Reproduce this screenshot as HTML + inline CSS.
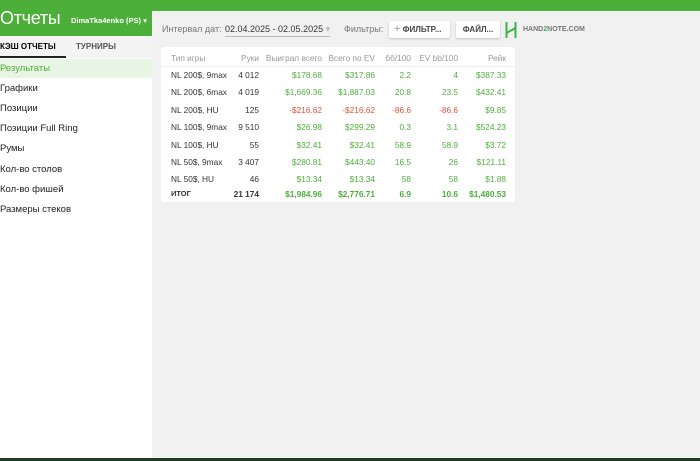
<!DOCTYPE html>
<html><head><meta charset="utf-8"><style>
*{margin:0;padding:0;box-sizing:border-box}
body{width:700px;height:461px;overflow:hidden;background:#fff;font-family:"Liberation Sans","DejaVu Sans",sans-serif;position:relative}
.top{position:absolute;left:0;top:0;width:700px;height:11px;background:#4caf3a}
.lh{position:absolute;left:0;top:0;width:152px;height:36px;background:#4caf3a}
.title{position:absolute;left:0;top:8px;color:#fff;font-size:18px;letter-spacing:-0.3px}
.user{position:absolute;left:71px;top:16px;color:#fff;font-size:7.5px;font-weight:bold;white-space:nowrap}
.tabs{position:absolute;left:0;top:36px;width:152px;height:22px;background:#f4f4f4;font-size:8px;font-weight:bold}
.tabs span{position:absolute;top:6px}
.ul{position:absolute;left:0;top:56px;width:66px;height:2px;background:#222}
.menu{position:absolute;left:0;top:59px;width:152px}
.menu div{height:20.3px;line-height:22px;font-size:9.5px;color:#222}
.menu .a{background:#e8f5e4;color:#4caf3a;height:18.5px;line-height:20px}
.main{position:absolute;left:152px;top:11px;width:548px;height:447px;background:#f1f1f1}
.bot{position:absolute;left:0;top:458px;width:700px;height:3px;background:#1f3d22}
.lbl{position:absolute;font-size:9px;color:#777;white-space:nowrap}
.btn{position:absolute;top:21px;height:17px;background:#fff;box-shadow:0 1px 2px rgba(0,0,0,.2);font-size:8px;font-weight:bold;color:#444;line-height:17px;padding:0 5px;border-radius:2px;white-space:nowrap;overflow:hidden}
.card{position:absolute;left:161px;top:47px;width:354px;height:155px;background:#fff;border-radius:3px}
.r{position:absolute;left:0;width:354px;font-size:8.3px;color:#333}
.r span{position:absolute;text-align:right;white-space:nowrap}
.h{color:#999}
.g{color:#4caf3a}.rd{color:#e8503a}
</style></head><body>
<div class="main"></div>
<div class="top"></div>
<div class="lh"></div>
<div class="title">Отчеты</div>
<div class="user">DimaTka4enko (PS) ▾</div>
<div class="tabs"><span style="left:0">КЭШ ОТЧЕТЫ</span><span style="left:76px;color:#555">ТУРНИРЫ</span></div>
<div class="ul"></div>
<div class="menu"><div class="a">Результаты</div><div>Графики</div><div>Позиции</div><div>Позиции Full Ring</div><div>Румы</div><div>Кол-во столов</div><div>Кол-во фишей</div><div>Размеры стеков</div></div>
<div class="lbl" style="left:162px;top:24px">Интервал дат:</div>
<div class="lbl" style="left:225px;top:24px;color:#333;border-bottom:1px solid #bbb;padding-bottom:1px">02.04.2025 - 02.05.2025 <span style="color:#bbb">▾</span></div>
<div class="lbl" style="left:344px;top:24px">Фильтры:</div>
<div class="btn" style="left:389px;width:61px"><span style="color:#999;font-weight:normal;font-size:11px">+</span> ФИЛЬТР...</div>
<div class="btn" style="left:456px;width:44px;text-align:center">ФАЙЛ...</div>
<svg style="position:absolute;left:505px;top:22px" width="12" height="16"><path d="M1.5 0V16M10.5 0V16M1.5 11L10.5 6" stroke="#3cb34a" stroke-width="2" fill="none"/></svg>
<div style="position:absolute;left:523px;top:26px;font-size:7px;font-weight:bold;color:#777">HAND<span style="color:#3cb34a">2</span>NOTE.COM</div>
<div class="card">
<div class="r h" style="top:6px"><span style="left:10px;text-align:left">Тип игры</span><span style="right:256px">Руки</span><span style="right:193px">Выиграл всего</span><span style="right:140px">Всего по EV</span><span style="right:104px">бб/100</span><span style="right:57px">EV bb/100</span><span style="right:9px">Рейк</span></div>
<div style="position:absolute;left:0;top:19px;width:354px;height:1px;background:#eee"></div>
<div class="r" style="top:23px"><span style="left:10px;text-align:left">NL 200$, 9max</span><span style="right:256px">4 012</span><span class="g" style="right:193px">$178.68</span><span class="g" style="right:140px">$317.86</span><span class="g" style="right:104px">2.2</span><span class="g" style="right:57px">4</span><span class="g" style="right:9px">$387.33</span></div>
<div class="r" style="top:40px"><span style="left:10px;text-align:left">NL 200$, 6max</span><span style="right:256px">4 019</span><span class="g" style="right:193px">$1,669.36</span><span class="g" style="right:140px">$1,887.03</span><span class="g" style="right:104px">20.8</span><span class="g" style="right:57px">23.5</span><span class="g" style="right:9px">$432.41</span></div>
<div class="r" style="top:58px"><span style="left:10px;text-align:left">NL 200$, HU</span><span style="right:256px">125</span><span class="rd" style="right:193px">-$216.62</span><span class="rd" style="right:140px">-$216.62</span><span class="rd" style="right:104px">-86.6</span><span class="rd" style="right:57px">-86.6</span><span class="g" style="right:9px">$9.85</span></div>
<div class="r" style="top:75px"><span style="left:10px;text-align:left">NL 100$, 9max</span><span style="right:256px">9 510</span><span class="g" style="right:193px">$26.98</span><span class="g" style="right:140px">$299.29</span><span class="g" style="right:104px">0.3</span><span class="g" style="right:57px">3.1</span><span class="g" style="right:9px">$524.23</span></div>
<div class="r" style="top:93px"><span style="left:10px;text-align:left">NL 100$, HU</span><span style="right:256px">55</span><span class="g" style="right:193px">$32.41</span><span class="g" style="right:140px">$32.41</span><span class="g" style="right:104px">58.9</span><span class="g" style="right:57px">58.9</span><span class="g" style="right:9px">$3.72</span></div>
<div class="r" style="top:110px"><span style="left:10px;text-align:left">NL 50$, 9max</span><span style="right:256px">3 407</span><span class="g" style="right:193px">$280.81</span><span class="g" style="right:140px">$443.40</span><span class="g" style="right:104px">16.5</span><span class="g" style="right:57px">26</span><span class="g" style="right:9px">$121.11</span></div>
<div class="r" style="top:127px"><span style="left:10px;text-align:left">NL 50$, HU</span><span style="right:256px">46</span><span class="g" style="right:193px">$13.34</span><span class="g" style="right:140px">$13.34</span><span class="g" style="right:104px">58</span><span class="g" style="right:57px">58</span><span class="g" style="right:9px">$1.88</span></div>
<div class="r" style="top:142px;font-weight:bold"><span style="left:10px;text-align:left;font-size:7.5px">ИТОГ</span><span style="right:256px">21 174</span><span class="g" style="right:193px">$1,984.96</span><span class="g" style="right:140px">$2,776.71</span><span class="g" style="right:104px">6.9</span><span class="g" style="right:57px">10.6</span><span class="g" style="right:9px">$1,480.53</span></div>
</div>
<div class="bot"></div>
</body></html>
